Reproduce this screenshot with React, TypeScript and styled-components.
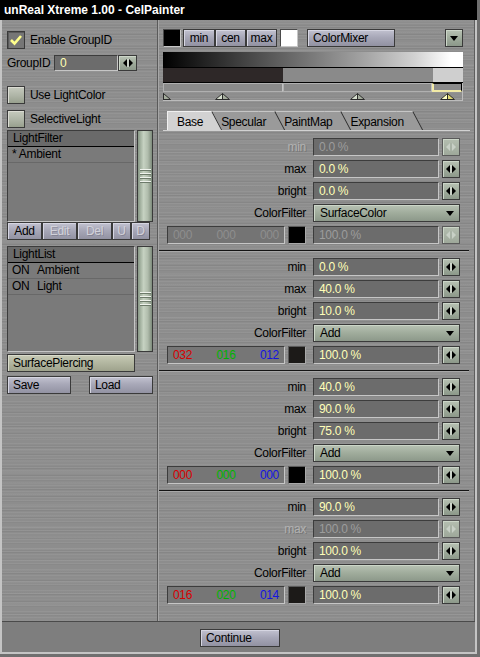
import styled, { createGlobalStyle, css } from "styled-components";

const GlobalStyle = createGlobalStyle`
  html, body { margin: 0; padding: 0; }
  body {
    width: 480px;
    height: 657px;
    overflow: hidden;
    background-color: #9a9a9a;
    background-image: radial-gradient(#6e6e6e 0.7px, transparent 0.9px);
    background-size: 2px 2px;
    font-family: "Liberation Sans", Arial, sans-serif;
    font-size: 12px;
    letter-spacing: -0.3px;
    color: #000;
  }
`;

// brushed metal look used by the dialog body
const metal = css`
  background-color: #8d8d8d;
  background-image:
    repeating-linear-gradient(180deg, rgba(255,255,255,0.06) 0 1px, transparent 1px 3px),
    repeating-linear-gradient(180deg, rgba(0,0,0,0.05) 0 1px, transparent 1px 5px, rgba(0,0,0,0.03) 5px 6px, transparent 6px 7px),
    repeating-linear-gradient(180deg, rgba(255,255,255,0.03) 0 2px, transparent 2px 11px);
`;

const lavender = css`
  border: 1px solid #3a3a3a;
  background: linear-gradient(180deg, #c2c2d0 0%, #a8a8b8 45%, #9292a2 100%);
  box-shadow: inset 1px 1px 0 #d6d6e2;
`;

const greenish = css`
  border: 1px solid #3a3a3a;
  background: linear-gradient(180deg, #b8c2b4 0%, #a0ac9c 50%, #8c988a 100%);
  box-shadow: inset 1px 1px 0 #ccd6c8;
`;

const sunken = css`
  border-top: 1px solid #3c3c3c;
  border-left: 1px solid #3c3c3c;
  border-bottom: 1px solid #c6c6c6;
  border-right: 1px solid #c6c6c6;
`;

const Window = styled.div`
  width: 477px;
  height: 654px;
  display: flex;
  flex-direction: column;
`;

const TitleBar = styled.div`
  height: 20px;
  line-height: 20px;
  padding-left: 4px;
  background: #000;
  color: #fff;
  font-weight: bold;
  letter-spacing: 0;
`;

const Frame = styled.div`
  flex: 1;
  display: flex;
  flex-direction: column;
  border: 2px solid #c4c4c4;
  border-top: 0;
  ${metal}
`;

const Main = styled.div`
  flex: 1;
  display: flex;
  min-height: 0;
`;

const LeftPanel = styled.div`
  box-sizing: border-box;
  width: 156px;
  padding: 11px 0 0 5px;
  border-right: 1px solid #5a5a5a;
  display: flex;
  flex-direction: column;
`;

const RightPanel = styled.div`
  flex: 1;
  display: flex;
  flex-direction: column;
  border-left: 1px solid #a6a6a6;
  border-right: 1px solid #5e5e5e;
`;

/* ---------- left column ---------- */

const CheckRow = styled.div<{ $gap?: number }>`
  display: flex;
  align-items: center;
  gap: 5px;
  height: 18px;
  margin-top: ${p => p.$gap ?? 0}px;
`;

const CheckBox = styled.div<{ $on?: boolean }>`
  box-sizing: border-box;
  width: 18px;
  height: 18px;
  border: 1px solid #3a3a3a;
  display: flex;
  align-items: center;
  justify-content: center;
  ${p => p.$on
    ? css`background: #767676; box-shadow: inset 1px 1px 0 #5a5a5a;`
    : css`background: linear-gradient(180deg, #c6cabe 0%, #aeb4a6 55%, #98a08e 100%); box-shadow: inset 1px 1px 0 #dcdcd4;`}
`;

const GroupRow = styled.div`
  display: flex;
  align-items: center;
  height: 16px;
  margin-top: 6px;
`;

const GroupLabel = styled.span`
  width: 47px;
`;

const SmallField = styled.div`
  ${sunken}
  box-sizing: border-box;
  width: 64px;
  height: 16px;
  line-height: 14px;
  padding-left: 5px;
  background: #6c6c6c;
  color: #ffffb4;
`;

const SpinButton = styled.div<{ $w?: number; $h?: number; $dim?: boolean }>`
  ${greenish}
  box-sizing: border-box;
  width: ${p => p.$w ?? 18}px;
  height: ${p => p.$h ?? 18}px;
  display: flex;
  align-items: center;
  justify-content: center;
  ${p => p.$dim && css`
    background: linear-gradient(180deg, #b4beb0, #9ea89a);
    border-color: #5a5a5a;
  `}
`;

const ListBlock = styled.div<{ $gap: number }>`
  display: flex;
  gap: 2px;
  margin-top: ${p => p.$gap}px;
`;

const ListBox = styled.div<{ $h: number }>`
  ${sunken}
  box-sizing: border-box;
  width: 128px;
  height: ${p => p.$h}px;
  background: #7a7a7a;
`;

const ListHeader = styled.div`
  height: 15px;
  line-height: 15px;
  padding-left: 5px;
  background: #6a6a6a;
  border-bottom: 1px solid #000;
`;

const ListRow = styled.div`
  height: 15px;
  line-height: 15px;
  padding-left: 4px;
  border-bottom: 1px solid #686868;
`;

const OnFlag = styled.span`
  display: inline-block;
  width: 25px;
`;

const ScrollBar = styled.div<{ $h: number }>`
  box-sizing: border-box;
  width: 16px;
  height: ${p => p.$h}px;
  border: 1px solid #3a3a3a;
  background: linear-gradient(90deg, #889886 0%, #c6d2c2 40%, #b0bcac 70%, #7e8c7c 100%);
  display: flex;
  align-items: center;
  justify-content: center;
`;

const Grip = styled.div`
  width: 11px;
  height: 15px;
  background: repeating-linear-gradient(180deg, #eef2ec 0 1px, #6c7a6a 1px 2px, transparent 2px 4px);
`;

const ToolRow = styled.div`
  display: flex;
  height: 18px;
`;

const Button = styled.div<{ $w: number; $h?: number; $left?: boolean; $dim?: boolean; $ml?: number }>`
  ${lavender}
  box-sizing: border-box;
  width: ${p => p.$w}px;
  height: ${p => p.$h ?? 18}px;
  line-height: ${p => (p.$h ?? 18) - 2}px;
  margin-left: ${p => p.$ml ?? 0}px;
  padding-left: ${p => (p.$left ? 5 : 0)}px;
  text-align: ${p => (p.$left ? "left" : "center")};
  color: ${p => (p.$dim ? "#d2d2da" : "#000")};
  ${p => p.$dim && css`text-shadow: 1px 1px 0 rgba(60, 60, 80, 0.25);`}
`;

const PlainButton = styled.div`
  box-sizing: border-box;
  width: 128px;
  height: 18px;
  line-height: 16px;
  padding-left: 5px;
  margin-top: 2px;
  border: 1px solid #3a3a3a;
  background: linear-gradient(180deg, #c8cab6 0%, #b2b6a0 50%, #9ea28c 100%);
  box-shadow: inset 1px 1px 0 #dadccc;
`;

const SaveRow = styled.div`
  display: flex;
  justify-content: space-between;
  width: 146px;
  margin-top: 4px;
`;

/* ---------- right column ---------- */

const TopRow = styled.div`
  display: flex;
  align-items: center;
  width: 300px;
  height: 18px;
  margin: 9px 0 0 4px;
`;

const Swatch = styled.div<{ $c: string; $ml?: number }>`
  box-sizing: border-box;
  width: 18px;
  height: 18px;
  margin-left: ${p => p.$ml ?? 0}px;
  background: ${p => p.$c};
  border: 1px solid #4a4a4a;
  border-right-color: #c6c6c6;
  border-bottom-color: #c6c6c6;
`;

const ButtonGroup = styled.div`
  display: flex;
  margin-left: 2px;
`;

const PushRight = styled.div`
  margin-left: auto;
`;

const Mixer = styled.div`
  width: 300px;
  margin: 5px 0 0 4px;
`;

const Ramp = styled.div`
  height: 15px;
  background: linear-gradient(90deg, #000 0%, #1e1e1e 12%, #4a4a4a 30%, #7a7a7a 50%, #a6a6a6 68%, #d2d2d2 84%, #fff 96%);
  border-bottom: 1px solid #000;
`;

const Bands = styled.div`
  display: flex;
  height: 14px;
  border-bottom: 1px solid #000;
`;

const Band = styled.div<{ $w: number; $c: string }>`
  width: ${p => p.$w}px;
  background: ${p => p.$c};
`;

const SliderArea = styled.div`
  border-right: 1px solid #bcbcbc;
  border-bottom: 1px solid #bcbcbc;
`;

const Track = styled.div`
  display: flex;
  height: 9px;
`;

const TrackSeg = styled.div<{ $w: number; $sel?: boolean }>`
  box-sizing: border-box;
  width: ${p => p.$w}px;
  background: #8a8a8a;
  ${p => p.$sel
    ? css`
      border-top: 1px solid #000;
      border-right: 1px solid #000;
      border-left: 2px solid #f2eaa6;
      border-bottom: 2px solid #f2eaa6;
    `
    : css`
      border: 1px solid #b0b0b0;
      border-right-color: #c2c2c2;
    `}
`;

const Handles = styled.div`
  position: relative;
  height: 8px;
  overflow: hidden;
`;

const HandleSpot = styled.div`
  position: absolute;
  top: 1px;
  width: 15px;
  height: 7px;
  display: flex;
`;

const TabBar = styled.div`
  display: flex;
  height: 19px;
  margin: 10px 4px 0 4px;
  padding-left: 4px;
  border-bottom: 1px solid #d2d2d2;
`;

const Tab = styled.div<{ $active?: boolean; $z: number }>`
  position: relative;
  z-index: ${p => p.$z};
  height: 19px;
  line-height: 20px;
  padding: 0 8px 0 9px;
  background: ${p => (p.$active ? "#d2d2d2" : "#9a9a9a")};
  border-top: 1px solid ${p => (p.$active ? "#f0f0f0" : "#c6c6c6")};
  border-left: 1px solid ${p => (p.$active ? "#f0f0f0" : "#c6c6c6")};
  box-sizing: border-box;

  &::after {
    content: "";
    position: absolute;
    z-index: -1;
    top: -1px;
    bottom: 0;
    left: calc(100% - 16px);
    width: 16px;
    background: inherit;
    border-top: 1px solid ${p => (p.$active ? "#f0f0f0" : "#c6c6c6")};
    border-right: 1px solid #2c2c2c;
    transform: skewX(28deg);
    transform-origin: top left;
  }
`;

const Sections = styled.div`
  display: flex;
  flex-direction: column;
  margin-right: 5px;
`;

const Section = styled.div`
  display: flex;
  flex-direction: column;
  gap: 4px;
  padding: 7px 0 6px 8px;

  & + & {
    border-top: 1px solid #141414;
    box-shadow: inset 0 1px 0 #a8a8a8;
  }
`;

const Row = styled.div`
  display: flex;
  align-items: center;
  height: 18px;
`;

const Label = styled.div<{ $dim?: boolean }>`
  width: 139px;
  margin-right: 7px;
  text-align: right;
  color: ${p => (p.$dim ? "#b2b2b2" : "#000")};
  ${p => p.$dim && css`text-shadow: 1px 1px 0 #767676;`}
`;

const Field = styled.div<{ $dim?: boolean }>`
  ${sunken}
  box-sizing: border-box;
  width: 126px;
  height: 18px;
  line-height: 16px;
  padding-left: 5px;
  margin-right: 3px;
  background: #6c6c6c;
  color: ${p => (p.$dim ? "#9c9c9c" : "#ffffb8")};
`;

const Select = styled.div`
  ${greenish}
  box-sizing: border-box;
  width: 147px;
  height: 18px;
  padding: 0 5px 0 6px;
  display: flex;
  align-items: center;
  justify-content: space-between;
`;

const RgbBox = styled.div<{ $dim?: boolean }>`
  ${sunken}
  box-sizing: border-box;
  width: 118px;
  height: 18px;
  padding: 0 5px;
  display: flex;
  align-items: center;
  justify-content: space-between;
  background: ${p => (p.$dim ? "#747474" : "#767676")};
`;

const Channel = styled.span<{ $c: string }>`
  color: ${p => p.$c};
`;

const ColorCell = styled.div<{ $c: string }>`
  box-sizing: border-box;
  width: 18px;
  height: 18px;
  margin: 0 7px 0 3px;
  background: ${p => p.$c};
  border: 1px solid #a8a8a8;
  border-top-color: #5a5a5a;
  border-left-color: #5a5a5a;
`;

const BottomBar = styled.div`
  height: 31px;
  box-sizing: border-box;
  padding: 7px 0 0 3px;
  display: flex;
  justify-content: center;
  background: #7e7e7e;
  border-top: 1px solid #4a4a4a;
`;

/* ---------- drawings ---------- */

const SpinIcon = ({ dim }: { dim?: boolean }) => {
  const c = dim ? "#c8d0c6" : "#000";
  return (
    <svg width="10" height="8" viewBox="0 0 10 8">
      <polygon points="4,0 0,4 4,8" fill={c} />
      <polygon points="6,0 10,4 6,8" fill={c} />
      <rect x="4.4" y="0" width="1.2" height="8" fill={dim ? "#a8b2a6" : "#e6ebe4"} />
    </svg>
  );
};

const DownIcon = () => (
  <svg width="8" height="5" viewBox="0 0 8 5">
    <polygon points="0,0 8,0 4,5" fill="#000" />
  </svg>
);

const CheckMark = () => (
  <svg width="14" height="12" viewBox="0 0 14 12">
    <polyline points="2,6 5.5,9.5 12,2" fill="none" stroke="#ffff8c" strokeWidth="2.6" />
  </svg>
);

const Handle = ({ yellow }: { yellow?: boolean }) => (
  <svg width="15" height="7" viewBox="0 0 15 7">
    <polygon points="7.5,0 7.5,7 0,7" fill={yellow ? "#ffffc4" : "#d4dccc"} />
    <polygon points="7.5,0 15,7 7.5,7" fill={yellow ? "#e2da74" : "#a4ac9c"} />
    <polygon points="7.5,0.5 14.5,6.5 0.5,6.5" fill="none" stroke="#2a2a2a" strokeWidth="1" />
    <line x1="7.5" y1="0.5" x2="7.5" y2="7" stroke="#2a2a2a" strokeWidth="1" />
  </svg>
);

/* ---------- data ---------- */

type Param = { label: string; value: string; dim?: boolean };
type Layer = {
  params: Param[];
  filter: string;
  rgb: [string, string, string];
  rgbDim?: boolean;
  swatch: string;
  amount: string;
  amountDim?: boolean;
};

const layers: Layer[] = [
  {
    params: [
      { label: "min", value: "0.0 %", dim: true },
      { label: "max", value: "0.0 %" },
      { label: "bright", value: "0.0 %" },
    ],
    filter: "SurfaceColor",
    rgb: ["000", "000", "000"],
    rgbDim: true,
    swatch: "#000",
    amount: "100.0 %",
    amountDim: true,
  },
  {
    params: [
      { label: "min", value: "0.0 %" },
      { label: "max", value: "40.0 %" },
      { label: "bright", value: "10.0 %" },
    ],
    filter: "Add",
    rgb: ["032", "016", "012"],
    swatch: "#1c1a18",
    amount: "100.0 %",
  },
  {
    params: [
      { label: "min", value: "40.0 %" },
      { label: "max", value: "90.0 %" },
      { label: "bright", value: "75.0 %" },
    ],
    filter: "Add",
    rgb: ["000", "000", "000"],
    swatch: "#000",
    amount: "100.0 %",
  },
  {
    params: [
      { label: "min", value: "90.0 %" },
      { label: "max", value: "100.0 %", dim: true },
      { label: "bright", value: "100.0 %" },
    ],
    filter: "Add",
    rgb: ["016", "020", "014"],
    swatch: "#1c1a18",
    amount: "100.0 %",
  },
];

const handles = [
  { x: 0 },
  { x: 59 },
  { x: 194 },
  { x: 284, yellow: true },
];

const tabs = ["Base", "Specular", "PaintMap", "Expansion"];

function LayerSection({ layer }: { layer: Layer }) {
  const dimRgb = layer.rgbDim;
  return (
    <Section>
      {layer.params.map(p => (
        <Row key={p.label}>
          <Label $dim={p.dim}>{p.label}</Label>
          <Field $dim={p.dim}>{p.value}</Field>
          <SpinButton $dim={p.dim}><SpinIcon dim={p.dim} /></SpinButton>
        </Row>
      ))}
      <Row>
        <Label>ColorFilter</Label>
        <Select>
          <span>{layer.filter}</span>
          <DownIcon />
        </Select>
      </Row>
      <Row>
        <RgbBox $dim={dimRgb}>
          <Channel $c={dimRgb ? "#8e8e8e" : "#d80000"}>{layer.rgb[0]}</Channel>
          <Channel $c={dimRgb ? "#8e8e8e" : "#00b400"}>{layer.rgb[1]}</Channel>
          <Channel $c={dimRgb ? "#8e8e8e" : "#1414e0"}>{layer.rgb[2]}</Channel>
        </RgbBox>
        <ColorCell $c={layer.swatch} />
        <Field $dim={layer.amountDim}>{layer.amount}</Field>
        <SpinButton $dim={layer.amountDim}><SpinIcon dim={layer.amountDim} /></SpinButton>
      </Row>
    </Section>
  );
}

export default function App() {
  return (
    <>
      <GlobalStyle />
      <Window>
        <TitleBar>unReal Xtreme 1.00 - CelPainter</TitleBar>
        <Frame>
          <Main>
            <LeftPanel>
              <CheckRow>
                <CheckBox $on><CheckMark /></CheckBox>
                <span>Enable GroupID</span>
              </CheckRow>
              <GroupRow>
                <GroupLabel>GroupID</GroupLabel>
                <SmallField>0</SmallField>
                <SpinButton $w={19} $h={16}><SpinIcon /></SpinButton>
              </GroupRow>
              <CheckRow $gap={15}>
                <CheckBox />
                <span>Use LightColor</span>
              </CheckRow>
              <CheckRow $gap={6}>
                <CheckBox />
                <span>SelectiveLight</span>
              </CheckRow>

              <ListBlock $gap={2}>
                <ListBox $h={92}>
                  <ListHeader>LightFilter</ListHeader>
                  <ListRow>* Ambient</ListRow>
                </ListBox>
                <ScrollBar $h={92}><Grip /></ScrollBar>
              </ListBlock>
              <ToolRow>
                <Button $w={35}>Add</Button>
                <Button $w={35} $dim>Edit</Button>
                <Button $w={35} $dim>Del</Button>
                <Button $w={19} $dim>U</Button>
                <Button $w={19} $dim>D</Button>
              </ToolRow>

              <ListBlock $gap={6}>
                <ListBox $h={106}>
                  <ListHeader>LightList</ListHeader>
                  <ListRow><OnFlag>ON</OnFlag>Ambient</ListRow>
                  <ListRow><OnFlag>ON</OnFlag>Light</ListRow>
                </ListBox>
                <ScrollBar $h={106}><Grip /></ScrollBar>
              </ListBlock>
              <PlainButton>SurfacePiercing</PlainButton>
              <SaveRow>
                <Button $w={64} $left>Save</Button>
                <Button $w={64} $left>Load</Button>
              </SaveRow>
            </LeftPanel>

            <RightPanel>
              <TopRow>
                <Swatch $c="#000" />
                <ButtonGroup>
                  <Button $w={32}>min</Button>
                  <Button $w={31}>cen</Button>
                  <Button $w={31}>max</Button>
                </ButtonGroup>
                <Swatch $c="#fff" $ml={3} />
                <Button $w={88} $left $ml={9}>ColorMixer</Button>
                <PushRight>
                  <SpinButton $w={18}><DownIcon /></SpinButton>
                </PushRight>
              </TopRow>

              <Mixer>
                <Ramp />
                <Bands>
                  <Band $w={120} $c="#2e2828" />
                  <Band $w={150} $c="#8a8a8a" />
                  <Band $w={30} $c="#cfcfcf" />
                </Bands>
                <SliderArea>
                  <Track>
                    <TrackSeg $w={120} />
                    <TrackSeg $w={149} />
                    <TrackSeg $w={30} $sel />
                  </Track>
                  <Handles>
                    {handles.map(h => (
                      <HandleSpot key={h.x} style={{ left: h.x - 7 }}>
                        <Handle yellow={h.yellow} />
                      </HandleSpot>
                    ))}
                  </Handles>
                </SliderArea>
              </Mixer>

              <TabBar>
                {tabs.map((t, i) => (
                  <Tab key={t} $active={i === 0} $z={tabs.length - i}>{t}</Tab>
                ))}
              </TabBar>

              <Sections>
                {layers.map((l, i) => (
                  <LayerSection key={i} layer={l} />
                ))}
              </Sections>
            </RightPanel>
          </Main>
          <BottomBar>
            <Button $w={80} $left>Continue</Button>
          </BottomBar>
        </Frame>
      </Window>
    </>
  );
}
